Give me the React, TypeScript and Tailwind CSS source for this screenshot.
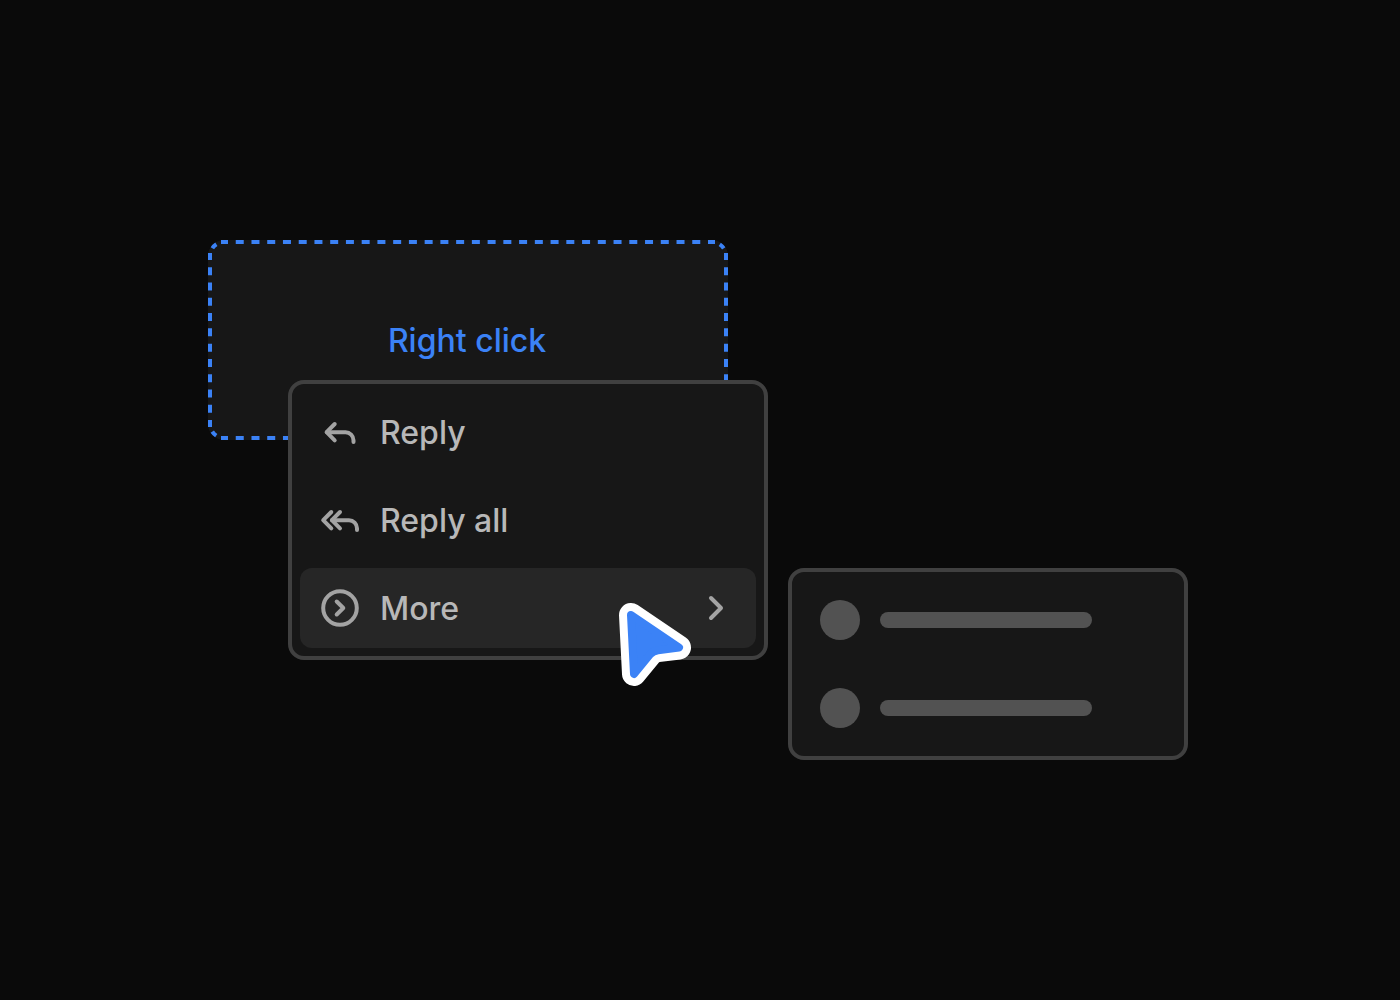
import type { ReactNode } from 'react'

function Icon({ children }: { children: ReactNode }) {
  return (
    <svg
      viewBox="0 0 40 40"
      fill="none"
      stroke="currentColor"
      strokeWidth="4"
      strokeLinecap="round"
      strokeLinejoin="round"
      aria-hidden="true"
      className="size-10 shrink-0 text-[#a3a3a3]"
    >
      {children}
    </svg>
  )
}

function ReplyIcon() {
  return (
    <Icon>
      <path d="M14.7 12 6.6 20.2l8.1 8.2" />
      <path d="M7 20.2h18.5a8 8 0 0 1 8 8V30" />
    </Icon>
  )
}

function ReplyAllIcon() {
  return (
    <Icon>
      <path d="M11.3 12 3.2 20.2l8.1 8.2" />
      <path d="M20 12 11.9 20.2l8.1 8.2" />
      <path d="M12 20.2h17a8 8 0 0 1 8 8V30" />
    </Icon>
  )
}

function MoreIcon() {
  return (
    <Icon>
      <circle cx="20" cy="20" r="16.8" />
      <path d="M16.7 13.5 23.3 20l-6.6 6.5" />
    </Icon>
  )
}

function ChevronIcon() {
  return (
    <Icon>
      <path d="m15 10 10 10-10 10" />
    </Icon>
  )
}

function Cursor() {
  const d = 'M31 15 79 47.5 58 50.2Q53 51 50 54.5L34 74Z'
  return (
    <svg
      viewBox="0 0 100 100"
      strokeLinejoin="round"
      aria-hidden="true"
      className="absolute left-98 top-90 size-25"
    >
      <path d={d} fill="#fff" stroke="#fff" strokeWidth="24" />
      <path d={d} fill="#3b82f6" stroke="#3b82f6" strokeWidth="8" />
    </svg>
  )
}

// Dashes are spread evenly along each side, with one short dash on every corner
function DashedOutline() {
  return (
    <svg
      viewBox="0 0 520 200"
      fill="none"
      stroke="currentColor"
      strokeWidth="4"
      aria-hidden="true"
      className="absolute inset-0 size-full"
    >
      <path
        d="M13 2H507M13 198H507"
        strokeDasharray="8 7.742"
        strokeDashoffset="1"
      />
      <path
        d="M2 13V187M518 13V187"
        strokeDasharray="8 7.273"
        strokeDashoffset="1"
      />
      <path
        d="M2 16A14 14 0 0 1 16 2M504 2A14 14 0 0 1 518 16M518 184A14 14 0 0 1 504 198M16 198A14 14 0 0 1 2 184"
        strokeDasharray="0 8.2 5.6 20"
      />
    </svg>
  )
}

function MenuItem({
  icon,
  label,
  active = false,
  submenu = false,
}: {
  icon: ReactNode
  label: string
  active?: boolean
  submenu?: boolean
}) {
  return (
    <button
      type="button"
      role="menuitem"
      aria-haspopup={submenu ? 'menu' : undefined}
      className={`flex h-20 items-center gap-5 rounded-xl px-5 text-left ${
        active ? 'bg-[#262626]' : ''
      }`}
    >
      {icon}
      <span className="flex-1 pt-0.5">{label}</span>
      {submenu ? <ChevronIcon /> : null}
    </button>
  )
}

function SkeletonRow() {
  return (
    <div className="flex h-20 items-center gap-5 px-5">
      <div className="size-10 rounded-full bg-[#525252]" />
      <div className="h-4 w-53 rounded-full bg-[#525252]" />
    </div>
  )
}

export default function App() {
  return (
    <main className="flex min-h-screen items-center justify-center bg-[#0a0a0a] pr-1 font-['Inter',sans-serif] text-[32px] leading-10 font-[450] text-[#b8b8b8]">
      <div className="relative h-130 w-245">
        <div className="relative flex h-50 w-130 items-center justify-center rounded-2xl bg-[#171717] pr-0.5 text-[#3b82f6]">
          <DashedOutline />
          <span className="pt-0.5">Right click</span>
        </div>
        <div
          role="menu"
          className="absolute left-20 top-35 flex w-120 flex-col gap-2 rounded-2xl border-4 border-[#404040] bg-[#171717] p-2"
        >
          <MenuItem icon={<ReplyIcon />} label="Reply" />
          <MenuItem icon={<ReplyAllIcon />} label="Reply all" />
          <MenuItem icon={<MoreIcon />} label="More" active submenu />
        </div>
        <div className="absolute left-145 top-82 flex w-100 flex-col gap-2 rounded-2xl border-4 border-[#404040] bg-[#171717] p-2">
          <SkeletonRow />
          <SkeletonRow />
        </div>
        <Cursor />
      </div>
    </main>
  )
}
